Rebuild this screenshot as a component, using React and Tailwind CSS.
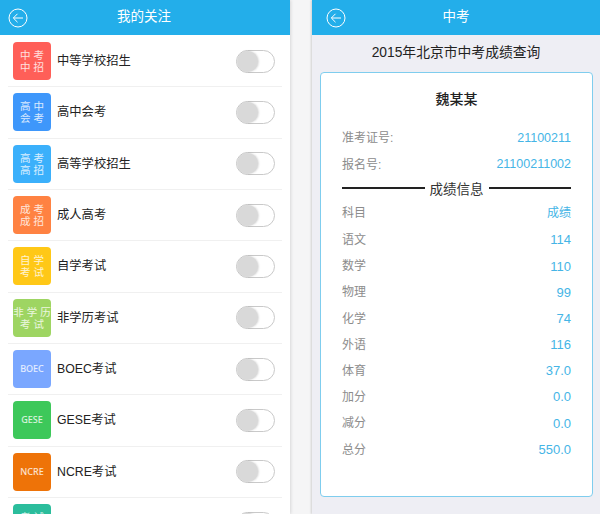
import React from "react";

const font = { fontFamily: '"Liberation Sans", "Noto Sans CJK SC", sans-serif' };

const exams = [
  { lines: ["中 考", "中 招"], name: "中等学校招生", color: "bg-[#ff5f58]" },
  { lines: ["高 中", "会 考"], name: "高中会考", color: "bg-[#3e97fb]" },
  { lines: ["高 考", "高 招"], name: "高等学校招生", color: "bg-[#3bb0fb]" },
  { lines: ["成 考", "成 招"], name: "成人高考", color: "bg-[#ff8242]" },
  { lines: ["自 学", "考 试"], name: "自学考试", color: "bg-[#ffc817]" },
  { lines: ["非 学 历", "考 试"], name: "非学历考试", color: "bg-[#9ed562]" },
  { lines: ["BOEC"], name: "BOEC考试", color: "bg-[#7aa7ff]" },
  { lines: ["GESE"], name: "GESE考试", color: "bg-[#3dc85a]" },
  { lines: ["NCRE"], name: "NCRE考试", color: "bg-[#ee7308]" },
  // last row is cut off by the bottom of the screenshot, its label is not visible
  { lines: ["考 试", "考 试"], name: "", color: "bg-[#2bbd9c]" },
];

const scores = [
  ["语文", "114"],
  ["数学", "110"],
  ["物理", "99"],
  ["化学", "74"],
  ["外语", "116"],
  ["体育", "37.0"],
  ["加分", "0.0"],
  ["减分", "0.0"],
  ["总分", "550.0"],
];

function BackIcon() {
  return (
    <svg width="20" height="20" viewBox="0 0 20 20" fill="none" stroke="white" strokeWidth="1">
      <circle cx="10" cy="10" r="9" />
      <path d="M15 10H5.5M9.5 5.8L5.3 10l4.2 4.2" />
    </svg>
  );
}

function Header({ title, className, titleClass }) {
  return (
    <div className={`h-[35px] shrink-0 bg-[#23aeea] flex items-center relative ${className}`}>
      <BackIcon />
      <div className={`absolute inset-0 flex items-center justify-center text-white text-[13.5px] ${titleClass}`}>
        {title}
      </div>
    </div>
  );
}

function Toggle() {
  return (
    <div className="w-[39px] h-[23px] rounded-full border border-[#c9c9c9] bg-white">
      <div className="w-[21px] h-[21px] rounded-full bg-[#d9d9d9] shadow-[1px_0_2px_rgba(0,0,0,0.15)]" />
    </div>
  );
}

function ExamRow({ exam }) {
  return (
    <div className="h-[51.33px] shrink-0 mx-2 pl-[5px] pr-[7px] flex items-center border-b border-[#f0f0f0]">
      <div
        className={`w-[38px] h-[38px] rounded-[4px] flex flex-col items-center justify-center text-white/80 text-[10.5px] leading-[12px] whitespace-nowrap ${exam.color}`}
      >
        {exam.lines.map((line, i) => (
          <div
            key={i}
            className={exam.lines.length === 1 ? "text-[9px] font-medium" : ""}
            style={exam.lines.length === 1 ? { fontFamily: '"Noto Sans", sans-serif' } : undefined}
          >
            {line}
          </div>
        ))}
      </div>
      <div className="ml-[6px] flex-1 text-[12.3px] text-[#222]">{exam.name}</div>
      <Toggle />
    </div>
  );
}

function Row({ label, value, className, valueClass = "text-[13px]" }) {
  return (
    <div className={`flex justify-between items-center text-[12px] ${className}`}>
      <span className="text-[#8c8c8c]">{label}</span>
      <span className={`text-[#45b5e6] ${valueClass}`}>{value}</span>
    </div>
  );
}

export default function App() {
  return (
    <div className="w-[600px] h-[514px] overflow-hidden flex bg-[#f5f5f6]" style={font}>
      {/* left phone */}
      <div className="w-[290px] h-full flex flex-col bg-white shadow-[1px_0_3px_rgba(0,0,0,0.12)] overflow-hidden">
        <Header title="我的关注" className="pl-2" titleClass="pr-[2px]" />
        <div className="pt-px flex flex-col">
          {exams.map((exam, i) => (
            <ExamRow key={i} exam={exam} />
          ))}
        </div>
      </div>

      {/* right phone */}
      <div className="w-[288px] h-full ml-[22px] flex flex-col bg-[#eeeef4] shadow-[-1px_0_2px_rgba(0,0,0,0.15)]">
        <Header title="中考" className="pl-[14px]" />
        <div className="h-[37px] shrink-0 flex items-center justify-center text-[13.8px] text-[#222]">
          2015年北京市中考成绩查询
        </div>
        <div className="ml-2 mr-[7px] h-[425px] rounded-[4px] border border-[#7fcdee] bg-white px-[21px]">
          <div className="h-[52px] flex items-center justify-center text-[14px] font-medium text-[#222]">
            魏某某
          </div>
          <Row label="准考证号:" value="21100211" className="h-[26px]" valueClass="text-[12.5px]" />
          <Row label="报名号:" value="21100211002" className="h-[27px]" valueClass="text-[12.5px]" />
          <div className="h-[23px] flex items-center gap-[5px]">
            <div className="flex-1 h-[2px] bg-[#222] -mt-[4px]" />
            <span className="text-[13.5px] text-[#333] mt-[2px]">成绩信息</span>
            <div className="flex-1 h-[2px] bg-[#222] -mt-[4px]" />
          </div>
          <Row label="科目" value="成绩" className="h-[23px] mb-[3px]" valueClass="text-[12px]" />
          {scores.map(([label, value]) => (
            <Row key={label} label={label} value={value} className="h-[26.2px]" />
          ))}
        </div>
      </div>
    </div>
  );
}
